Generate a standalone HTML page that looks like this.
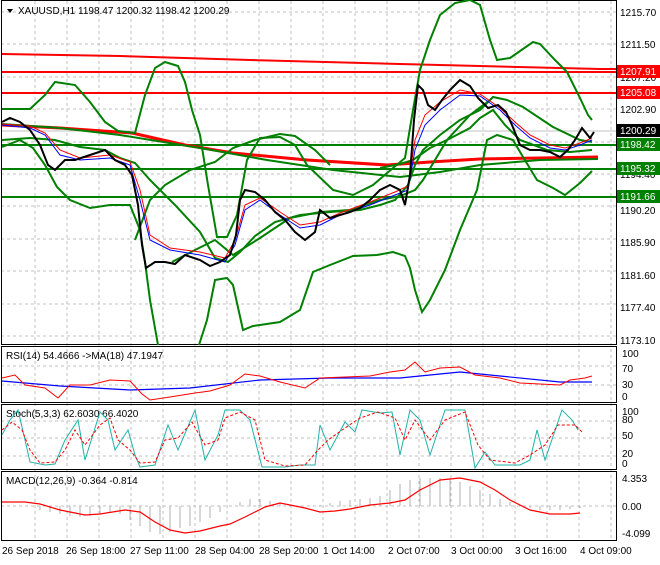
<!DOCTYPE html>
<html><head><meta charset="utf-8"><style>
body{margin:0;background:#fff;width:660px;height:560px;overflow:hidden;font-family:"Liberation Sans",sans-serif}
svg text{font-family:"Liberation Sans",sans-serif;font-size:10px;fill:#000}
</style></head><body>
<svg width="660" height="560" xmlns="http://www.w3.org/2000/svg">
<rect width="660" height="560" fill="#fff"/>
<g stroke="#c0c0c0" stroke-dasharray="3,3" stroke-width="1">
<path d="M35 1V540M67 1V540M99 1V540M131 1V540M163 1V540M195 1V540M227 1V540M259 1V540M291 1V540M323 1V540M355 1V540M387 1V540M419 1V540M451 1V540M483 1V540M515 1V540M547 1V540M579 1V540M611 1V540"/>
<path d="M1 12H616M1 44H616M1 77H616M1 109H616M1 142H616M1 174H616M1 206H616M1 239H616M1 271H616M1 304H616M1 336H616"/>
<path d="M1 366H616M1 385H616M1 421H616M1 438H616M1 456H616M1 506H616"/>
</g>
<line x1="1" y1="131" x2="616" y2="131" stroke="#c0c0c0"/>
<g fill="none" stroke="#000">
<rect x="1.5" y="0.5" width="615" height="344"/>
<rect x="1.5" y="346.5" width="615" height="56"/>
<rect x="1.5" y="404.5" width="615" height="65"/>
<rect x="1.5" y="471.5" width="615" height="69"/>
</g>
<path d="M2 54L120 56L250 60L400 64L600 69L616 69" stroke="#f00" stroke-width="2" fill="none"/>
<path d="M2 72H616M2 93H616" stroke="#f00" stroke-width="2"/>
<path d="M2 145H616M2 169H616M2 197H616" stroke="#008000" stroke-width="2"/>
<path d="M2 125L60 128L132 133L185 145L233 153L307 160L387 165L430 162L480 159L540 158L598 157" stroke="#f00" stroke-width="3" fill="none"/>
<path d="M2 124L60 128L120 135L200 148L267 160L333 170L400 177L440 172L480 165L540 160L598 159" stroke="#008000" stroke-width="2" fill="none"/>
<g stroke="#008000" stroke-width="2" fill="none">
<!-- big upper -->
<path d="M2 109L30 109L45 95L55 82L75 85L90 102L105 122L118 131L135 133L145 95L155 68L165 62L178 66L185 82L192 110L200 135L208 185L217 237L227 237L237 215L247 160L260 138L280 137L295 145L307 165L333 190L353 195L373 185L393 168L405 158L413 110L420 70L430 40L440 15L455 3L470 0L480 5L490 40L497 60L510 58L533 42L540 44L555 60L567 72L580 98L588 115L592 120"/>
<!-- big lower -->
<path d="M2 147L20 140L33 148L45 165L57 187L70 200L90 208L110 205L130 205L140 230L145 262L150 300L158 345M199 345L207 320L215 280L227 278L233 285L243 330L253 326L280 322L300 310L313 272L330 265L353 256L377 255L393 252L405 256L410 268L415 290L422 312L430 300L445 270L460 230L477 190L487 140L497 135L513 140L523 157L537 180L553 188L565 195L580 183L592 171"/>
<!-- small bands -->
<path d="M2 140L30 138L55 140L80 147L105 150L120 158L135 163L150 180L175 205L200 232L215 258L228 262L240 252L255 236L275 222L300 215L330 212L360 210L380 205L395 200L408 185L415 165L423 150L440 135L460 120L480 110L493 97L507 100L523 107L553 127L580 140L592 142"/>
<path d="M135 240L150 200L165 185L190 170L215 162L233 148L255 140L280 134L295 136L315 150L330 165M380 168L400 164L413 160L430 148L447 140L470 128L480 118L493 110L505 125L520 140L547 150L570 152L592 150"/>
<path d="M172 262L195 250L215 240L233 255L260 238L290 218L320 212L350 210L380 200L400 196L415 190L423 180L447 140L470 115L490 100"/>
</g>
<path d="M2 125L30 128L45 135L60 155L80 160L110 158L130 165L140 200L150 240L170 250L200 255L225 262L235 245L245 210L260 200L280 215L300 228L320 225L340 215L370 205L395 195L408 190L415 150L425 125L440 110L460 95L480 96L500 110L515 125L530 138L550 148L565 150L580 145L592 140" stroke="#00f" stroke-width="1" fill="none"/>
<path d="M2 124L30 126L45 133L60 150L80 158L110 155L130 162L140 190L150 235L170 248L200 252L225 258L235 240L245 205L260 198L280 212L300 225L320 222L340 213L370 202L395 192L408 186L415 140L425 115L440 102L460 90L480 94L500 108L515 122L530 135L550 145L565 148L580 143L592 138" stroke="#f00" stroke-width="1" fill="none"/>
<path d="M2 122L10 118L20 122L30 130L40 145L48 165L55 170L65 160L75 160L90 155L105 150L115 160L125 165L132 175L138 205L142 245L146 268L155 262L165 262L175 264L185 255L200 260L210 266L220 262L230 255L236 235L240 200L245 190L255 192L265 200L275 212L285 220L295 232L305 240L315 232L320 210L330 218L340 215L350 212L360 208L370 200L380 190L390 185L400 190L405 205L410 175L414 120L418 85L423 90L428 105L435 110L442 100L450 90L460 80L470 86L478 98L488 108L498 105L506 112L512 125L520 145L530 150L540 150L550 152L560 157L568 150L575 140L582 128L590 138L594 132" stroke="#000" stroke-width="2" fill="none"/>
<g font-size="10">
<text x="620" y="16">1215.70</text><text x="620" y="48">1211.50</text><text x="620" y="81">1207.20</text><text x="620" y="113">1202.90</text><text x="620" y="178">1194.40</text><text x="620" y="214">1190.20</text><text x="620" y="246">1185.90</text><text x="620" y="279">1181.60</text><text x="620" y="311">1177.40</text><text x="620" y="344">1173.10</text>
</g>
<rect x="617" y="65" width="43" height="13" fill="#f00"/><text x="620" y="75" style="fill:#fff">1207.91</text>
<rect x="617" y="86" width="43" height="13" fill="#f00"/><text x="620" y="96" style="fill:#fff">1205.08</text>
<rect x="617" y="124" width="43" height="13" fill="#000"/><text x="620" y="134" style="fill:#fff">1200.29</text>
<rect x="617" y="138" width="43" height="13" fill="#008000"/><text x="620" y="148" style="fill:#fff">1198.42</text>
<rect x="617" y="162" width="43" height="13" fill="#008000"/><text x="620" y="172" style="fill:#fff">1195.32</text>
<rect x="617" y="190" width="43" height="13" fill="#008000"/><text x="620" y="200" style="fill:#fff">1191.66</text>
<path d="M7 9L13 9L10 13Z" fill="#000"/>
<text x="18" y="14">XAUUSD,H1  1198.47 1200.32 1198.42 1200.29</text>
<text x="6" y="359">RSI(14) 54.4666  -&gt;MA(18) 47.1947</text>
<g font-size="10"><text x="622" y="357">100</text><text x="622" y="372">70</text><text x="622" y="388">30</text><text x="622" y="400">0</text></g>
<path d="M2 381L60 386L130 390L190 388L260 380L330 378L400 378L460 372L500 376L560 382L592 382" stroke="#00f" stroke-width="1.2" fill="none"/>
<path d="M2 378L15 375L25 385L45 388L58 398L70 385L90 385L110 380L130 381L142 394L150 400L170 397L195 393L210 391L230 385L245 374L260 376L280 382L305 388L320 378L345 377L370 376L390 372L405 370L415 362L425 372L440 368L460 367L475 375L500 378L520 383L540 384L560 385L570 380L585 378L592 376" stroke="#f00" stroke-width="1" fill="none"/>
<text x="6" y="417">Stoch(5,3,3) 62.6030 66.4020</text>
<g font-size="10"><text x="622" y="415">100</text><text x="622" y="423">80</text><text x="622" y="439">50</text><text x="622" y="457">20</text><text x="622" y="467">0</text></g>
<path d="M2 435L10 420L18 410L25 440L30 462L45 465L55 464L65 440L78 420L85 460L100 412L108 420L115 450L128 430L135 455L140 467L155 465L168 425L178 450L195 410L205 460L218 435L225 410L240 410L250 420L262 467L285 467L300 465L315 465L320 425L330 450L345 422L355 432L362 410L380 413L392 412L400 455L410 410L420 420L430 455L445 410L465 410L475 468L485 452L495 465L505 465L520 465L530 460L537 430L545 460L562 410L572 420L578 430" stroke="#20b2aa" stroke-width="1" fill="none"/>
<path d="M2 430L12 422L22 430L30 450L40 463L55 462L65 450L75 430L85 445L100 425L110 418L118 440L130 450L140 463L155 462L165 440L178 438L192 422L205 445L218 440L225 418L240 412L255 420L265 460L285 466L305 465L318 450L328 440L345 428L360 418L378 412L395 418L405 440L415 420L430 440L445 420L465 412L478 445L490 460L515 463L530 455L545 445L558 425L575 425L582 432" stroke="#f00" stroke-width="1" stroke-dasharray="3,2" fill="none"/>
<text x="6" y="484">MACD(12,26,9) -0.364 -0.814</text>
<g font-size="10"><text x="622" y="482">4.353</text><text x="622" y="510">0.00</text><text x="622" y="537">-4.099</text></g>
<path d="M40 506V510M50 506V512M60 506V514M70 506V516M80 506V517M90 506V516M100 506V514M110 506V512M120 506V514M130 506V520M140 506V526M150 506V532M160 506V534M170 506V532M180 506V528M190 506V526M200 506V522M210 506V518M220 506V512M230 506V506M240 506V502M250 506V499M260 506V499M270 506V501M280 506V503M290 506V505M300 506V506M310 506V506M320 506V505M330 506V503M340 506V501M350 506V500M360 506V499M370 506V498M380 506V496M390 506V490M400 506V484M410 506V480M420 506V478M430 506V478M440 506V478M450 506V478M460 506V482M470 506V486M480 506V490M490 506V494M500 506V499M510 506V502M520 506V506M530 506V508M540 506V510M550 506V510M560 506V510M570 506V509M580 506V508M590 506V506" stroke="#b0b0b0" stroke-width="1"/>
<path d="M2 502L25 502L40 504L60 510L85 515L100 514L125 510L140 512L155 522L170 530L185 533L200 531L220 526L230 524L245 517L265 507L280 503L295 506L305 508L320 512L335 511L350 509L370 505L390 503L405 500L420 490L440 480L460 478L480 482L495 490L510 500L530 510L550 514L570 514L580 513" stroke="#f00" stroke-width="1.2" fill="none"/>
<g font-size="10"><text x="2" y="554">26 Sep 2018</text><text x="66" y="554">26 Sep 18:00</text><text x="130" y="554">27 Sep 11:00</text><text x="195" y="554">28 Sep 04:00</text><text x="259" y="554">28 Sep 20:00</text><text x="323" y="554">1 Oct 14:00</text><text x="388" y="554">2 Oct 07:00</text><text x="451" y="554">3 Oct 00:00</text><text x="515" y="554">3 Oct 16:00</text><text x="580" y="554">4 Oct 09:00</text></g>
</svg>
</body></html>
